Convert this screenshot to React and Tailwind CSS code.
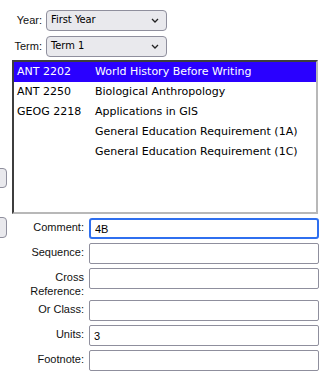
import React, { useState } from "react";

const COURSES = [
  { code: "ANT 2202", title: "World History Before Writing" },
  { code: "ANT 2250", title: "Biological Anthropology" },
  { code: "GEOG 2218", title: "Applications in GIS" },
  { code: "", title: "General Education Requirement (1A)" },
  { code: "", title: "General Education Requirement (1C)" },
];

function Chevron() {
  return (
    <svg width="8" height="5" viewBox="0 0 8 5" className="shrink-0">
      <path d="M1 1 L4 4 L7 1" fill="none" stroke="#222" strokeWidth="1.3" />
    </svg>
  );
}

function FakeSelect({ value }) {
  return (
    <div className="flex items-center justify-between w-[121px] h-[21px] pl-[4px] pr-[7px] bg-[#e9e9ed] border border-[#8f8f9d] rounded-[4px] text-[11px] text-black font-['DejaVu_Sans_Condensed','DejaVu_Sans',sans-serif]">
      <span>{value}</span>
      <Chevron />
    </div>
  );
}

function Field({ label, value, focused, tall }) {
  return (
    <div className="flex items-start gap-[5px]">
      <div
        className={
          "w-[72px] text-right text-[11px] leading-[14px] pt-[2px] text-[#111] " +
          (tall ? "h-[28px]" : "")
        }
      >
        {label}
      </div>
      <input
        defaultValue={value}
        autoFocus={focused}
        className={
          "w-[230px] h-[21px] px-[4px] text-[11px] text-black bg-white outline-none " +
          (focused
            ? "border-2 border-[#2f6fef] rounded-[3px] px-[3px]"
            : "border border-[#8f8f9d] rounded-[2px]")
        }
      />
    </div>
  );
}

export default function App() {
  const [selected, setSelected] = useState(0);

  return (
    <div className="w-[327px] h-[385px] bg-white overflow-hidden font-['Liberation_Sans',Arial,sans-serif]">
      {/* year / term */}
      <div className="pt-[10px] flex flex-col gap-[5px]">
        <div className="flex items-center gap-[4px]">
          <div className="w-[42px] text-right text-[11px] text-[#111]">Year:</div>
          <FakeSelect value="First Year" />
        </div>
        <div className="flex items-center gap-[4px]">
          <div className="w-[42px] text-right text-[11px] text-[#111]">Term:</div>
          <FakeSelect value="Term 1" />
        </div>
      </div>

      <div className="flex mt-[3px]">
        {/* cut-off side buttons */}
        <div className="w-[12px] flex flex-col">
          <div className="-ml-[15px] mt-[108px] w-[22px] h-[20px] bg-[#e9e9ed] border border-[#8f8f9d] rounded-[4px]" />
          <div className="-ml-[15px] mt-[29px] w-[22px] h-[21px] bg-[#e9e9ed] border border-[#8f8f9d] rounded-[4px]" />
        </div>

        <div className="flex flex-col">
          {/* course list */}
          <div className="w-[306px] h-[154px] border-2 border-t-[#3d3d3d] border-l-[#3d3d3d] border-r-[#b8b8b8] border-b-[#b8b8b8] bg-white font-['DejaVu_Sans',Verdana,sans-serif] text-[11px]">
            {COURSES.map((c, i) => (
              <div
                key={i}
                onClick={() => setSelected(i)}
                className={
                  "flex items-center h-[20px] pl-[3px] " +
                  (selected === i ? "bg-[#2a00ff] text-white" : "text-black")
                }
              >
                <span className="w-[78px]">{c.code}</span>
                <span>{c.title}</span>
              </div>
            ))}
          </div>

          {/* detail fields */}
          <div className="mt-[4px] flex flex-col gap-[4px]">
            <Field label="Comment:" value="4B" focused />
            <Field label="Sequence:" value="" />
            <Field label={<>Cross<br />Reference:</>} value="" tall />
            <Field label="Or Class:" value="" />
            <Field label="Units:" value="3" />
            <Field label="Footnote:" value="" />
          </div>
        </div>
      </div>
    </div>
  );
}
